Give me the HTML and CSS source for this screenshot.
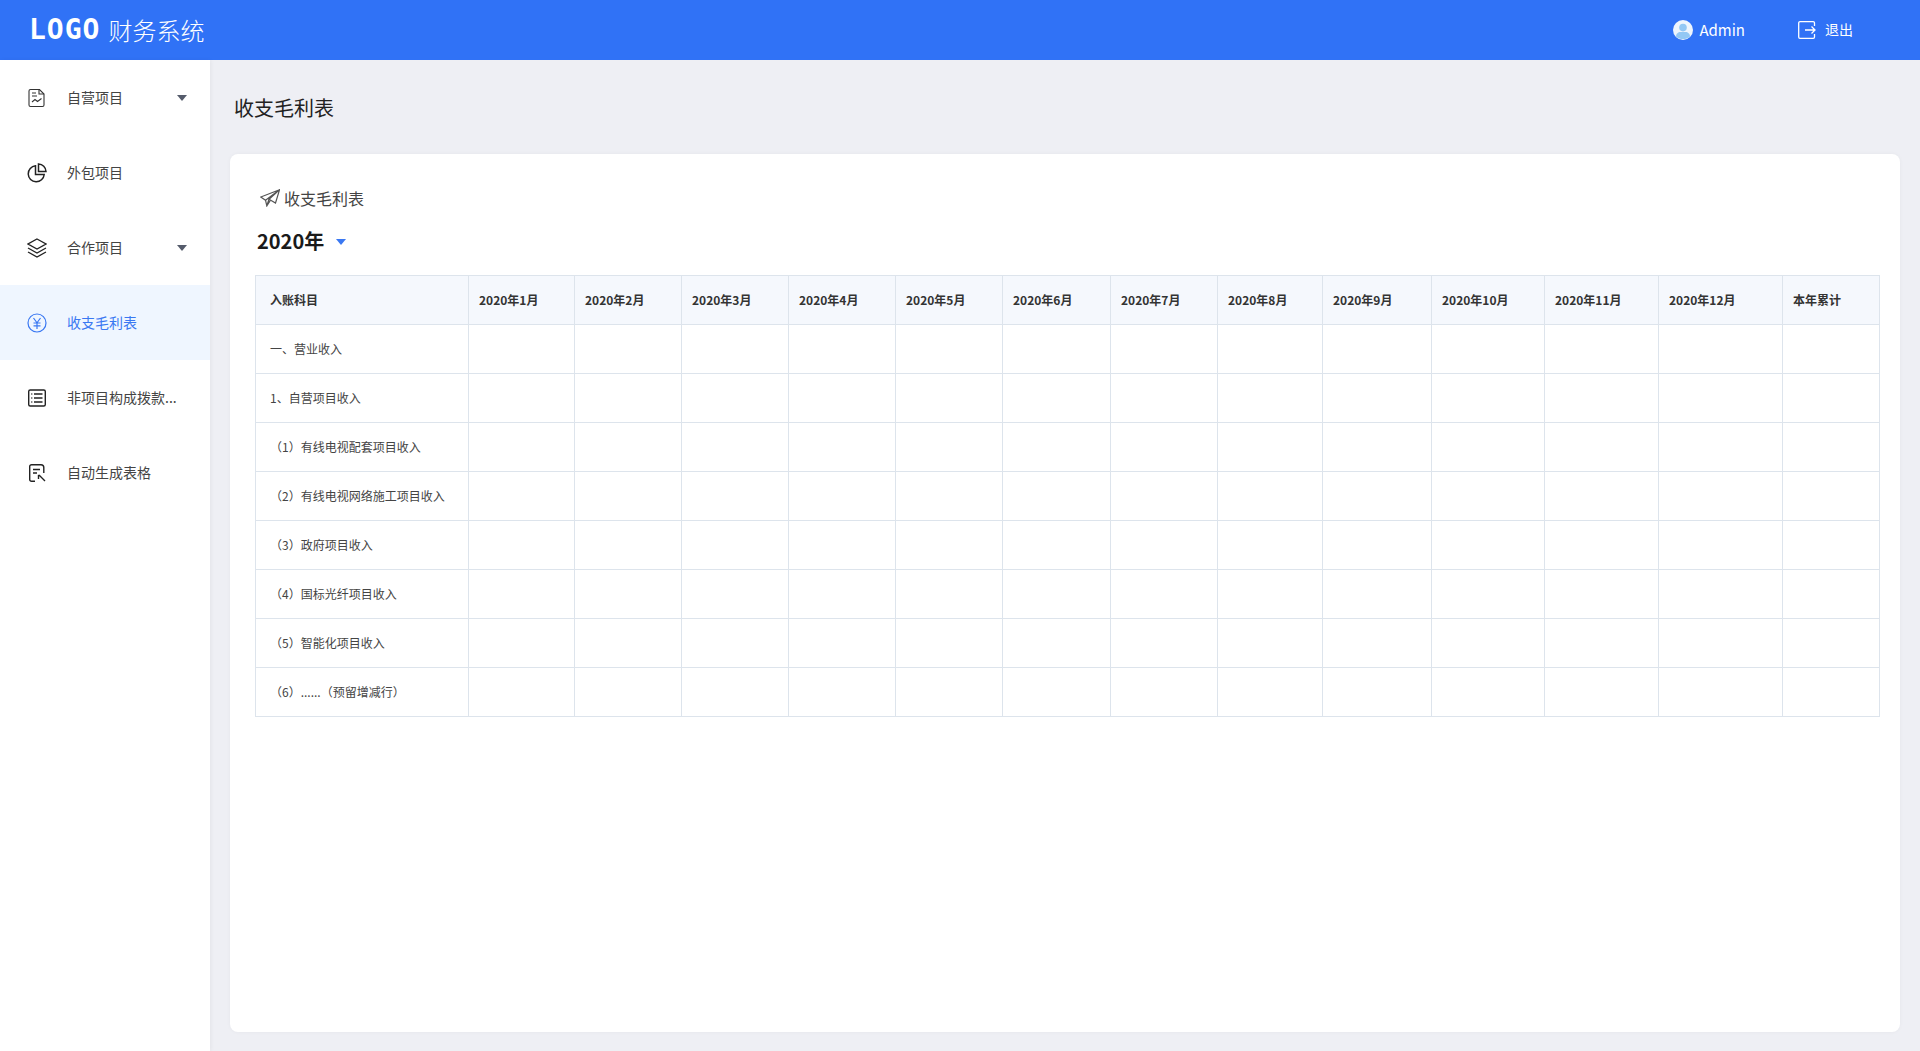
FILE: index.html
```html
<!DOCTYPE html>
<html lang="zh-CN">
<head>
    <meta charset="UTF-8">
    <title>收支毛利表</title>
    <link rel="stylesheet" href="styles.css">
</head>
<body>
    <header class="topbar">
        <div class="brand"><span class="brand-logo">LOGO</span><span class="brand-name">财务系统</span></div>
        <div class="topbar-user">
            <svg class="avatar" viewBox="0 0 20 20"><circle cx="10" cy="10" r="10" fill="#eef5fd"/><circle cx="10" cy="7.6" r="3.8" fill="#93c8f4"/><path d="M3 16.5c0-3 2.500-4.500 4-4.500h6c1.500 0 4 1.500 4 4.500-2 2-4.500 2.500-7 2.500s-5-.5-7-2.500z" fill="#93c8f4"/></svg>
            <span class="user-name">Admin</span>
        </div>
        <div class="topbar-logout">
            <svg class="logout-icon" viewBox="0 0 18 18" fill="none" stroke="#fff" stroke-width="1.300"><path d="M16.500 5V2a1.300 1.300 0 0 0-1.300-1.300H2A1.300 1.300 0 0 0 .7 2v14A1.300 1.300 0 0 0 2 17.300h13.200a1.300 1.300 0 0 0 1.300-1.300v-3"/><path d="M7 9h10M13.500 5.500 17 9l-3.500 3.500"/></svg>
            <span class="logout-text">退出</span>
        </div>
    </header>

    <div class="layout">
        <aside class="sidebar">
            <a class="nav-item">
                <svg class="nav-icon" viewBox="0 0 20 20" fill="none" stroke="#333" stroke-width="1.100"><path d="M3.500 1.500h9l4.500 4.500v11a1.500 1.500 0 0 1-1.500 1.500h-12A1.500 1.500 0 0 1 2 17V3a1.500 1.500 0 0 1 1.500-1.500z"/><path d="M12 1.500V6h5M5 5h4M5 8h5"/><path d="m5 14 3-2.500 2.500 2 4-3"/></svg>
                <span class="nav-label">自营项目</span>
                <i class="nav-caret"></i>
            </a>
            <a class="nav-item">
                <svg class="nav-icon" viewBox="0 0 20 20" fill="none" stroke="#222" stroke-width="1.500"><path d="M8.500 2.800a8 8 0 1 0 8.700 8.700H8.500z"/><path d="M11.500 .9a7.800 7.800 0 0 1 7.500 7.600h-7.500z"/></svg>
                <span class="nav-label">外包项目</span>
            </a>
            <a class="nav-item">
                <svg class="nav-icon" viewBox="0 0 20 20" fill="none" stroke="#222" stroke-width="1.300"><path d="M10 1 19 6l-9 5-9-5z"/><path d="m1 10 9 5 9-5"/><path d="m1 14 9 5 9-5"/></svg>
                <span class="nav-label">合作项目</span>
                <i class="nav-caret"></i>
            </a>
            <a class="nav-item active">
                <svg class="nav-icon" viewBox="0 0 20 20" fill="none" stroke="#3a78f2" stroke-width="1.200"><circle cx="10" cy="10" r="9"/><path d="M6.500 5 10 9.800 13.500 5M6.500 10h7M6.500 12.800h7M10 9.800V16"/></svg>
                <span class="nav-label">收支毛利表</span>
            </a>
            <a class="nav-item">
                <svg class="nav-icon" viewBox="0 0 20 20" fill="none" stroke="#222" stroke-width="1.400"><rect x="1.700" y="2" width="16.600" height="16" rx="1.500"/><path d="M7 6h8.500M7 10h8.500M7 14h8.500M4.300 6h1M4.300 10h1M4.300 14h1"/></svg>
                <span class="nav-label">非项目构成拨款...</span>
            </a>
            <a class="nav-item">
                <svg class="nav-icon" viewBox="0 0 20 20" fill="none" stroke="#222" stroke-width="1.400"><path d="M8 18.300H4.500A1.800 1.800 0 0 1 2.700 16.500V3.500A1.800 1.800 0 0 1 4.500 1.700h9.500a2.800 2.800 0 0 1 2.800 2.800V10"/><path d="M6 6.500h7M6 10h4"/><path d="M12.500 12.500h-1.300M12 12l6 6M11.500 12v4"/></svg>
                <span class="nav-label">自动生成表格</span>
            </a>
        </aside>

        <main class="content">
            <h1 class="page-title">收支毛利表</h1>
            <section class="card">
                <div class="card-title">
                    <svg class="plane-icon" viewBox="0 0 20 18" fill="none" stroke="#555" stroke-width="1.200"><path d="M19.500 .8 .8 8l4.700 3.200L19.500 .8zM19.500 .8 15.500 14 9 10.200 19.500 .8z"/><path d="M5.500 11.200 6.800 16.800 9 10.200M6.800 16.800 10.500 11.200"/></svg>
                    <span>收支毛利表</span>
                </div>
                <div class="year-select"><span>2020年</span><i class="year-caret"></i></div>

                <table class="report">
                    <colgroup>
                        <col class="col-name"><col class="col-106"><col class="col-107"><col class="col-107"><col class="col-107"><col class="col-107"><col class="col-108"><col class="col-107"><col class="col-105"><col class="col-109"><col class="col-113"><col class="col-114"><col class="col-124"><col class="col-97">
                    </colgroup>
                    <thead>
                        <tr><th>入账科目</th><th>2020年1月</th><th>2020年2月</th><th>2020年3月</th><th>2020年4月</th><th>2020年5月</th><th>2020年6月</th><th>2020年7月</th><th>2020年8月</th><th>2020年9月</th><th>2020年10月</th><th>2020年11月</th><th>2020年12月</th><th>本年累计</th></tr>
                    </thead>
                    <tbody>
                        <tr><td>一、营业收入</td><td></td><td></td><td></td><td></td><td></td><td></td><td></td><td></td><td></td><td></td><td></td><td></td><td></td></tr>
                        <tr><td>1、自营项目收入</td><td></td><td></td><td></td><td></td><td></td><td></td><td></td><td></td><td></td><td></td><td></td><td></td><td></td></tr>
                        <tr><td>（1）有线电视配套项目收入</td><td></td><td></td><td></td><td></td><td></td><td></td><td></td><td></td><td></td><td></td><td></td><td></td><td></td></tr>
                        <tr><td>（2）有线电视网络施工项目收入</td><td></td><td></td><td></td><td></td><td></td><td></td><td></td><td></td><td></td><td></td><td></td><td></td><td></td></tr>
                        <tr><td>（3）政府项目收入</td><td></td><td></td><td></td><td></td><td></td><td></td><td></td><td></td><td></td><td></td><td></td><td></td><td></td></tr>
                        <tr><td>（4）国标光纤项目收入</td><td></td><td></td><td></td><td></td><td></td><td></td><td></td><td></td><td></td><td></td><td></td><td></td><td></td></tr>
                        <tr><td>（5）智能化项目收入</td><td></td><td></td><td></td><td></td><td></td><td></td><td></td><td></td><td></td><td></td><td></td><td></td><td></td></tr>
                        <tr><td>（6）......（预留增减行）</td><td></td><td></td><td></td><td></td><td></td><td></td><td></td><td></td><td></td><td></td><td></td><td></td><td></td></tr>
                    </tbody>
                </table>
            </section>
        </main>
    </div>
</body>
</html>
```
FILE: styles.css
```css
* {
    box-sizing: border-box;
}
body {
    margin: 0;
    height: 100vh;
    overflow: hidden;
    display: flex;
    flex-direction: column;
    background: #eeeff4;
    color: #333;
    font-family: "Noto Sans CJK SC", "Noto Sans", sans-serif;
}

/* top bar */
.topbar {
    height: 60px;
    flex-shrink: 0;
    display: flex;
    align-items: center;
    padding-left: 29px;
    background: #3072f6;
    color: #fff;
    font-size: 14px;
}
.brand {
    display: flex;
    align-items: center;
    margin-right: auto;
    padding-bottom: 2px;
}
.brand-logo {
    font-family: "DejaVu Sans Mono", monospace;
    font-size: 28px;
    font-weight: 700;
    letter-spacing: 1px;
    margin-right: 8px;
}
.brand-name {
    font-size: 24px;
    font-weight: 300;
}
.topbar-user,
.topbar-logout {
    display: flex;
    align-items: center;
}
.topbar-user {
    gap: 6px;
    margin-right: 53px;
}
.user-name {
    font-size: 15px;
    margin-bottom: 2px;
}
.topbar-logout {
    gap: 9px;
    margin-right: 67px;
}
.logout-text {
    margin-bottom: 2px;
}
.avatar {
    width: 20px;
    height: 20px;
}
.logout-icon {
    width: 18px;
    height: 18px;
}

/* side menu */
.layout {
    flex: 1;
    display: flex;
    min-height: 0;
}
.sidebar {
    width: 210px;
    flex-shrink: 0;
    background: #fff;
    box-shadow: 1px 0 4px rgba(0, 0, 0, 0.05);
}
.nav-item {
    height: 75px;
    display: flex;
    align-items: center;
    padding-left: 27px;
    font-size: 14px;
    color: #444;
}
.nav-item.active {
    background: #eff6ff;
    color: #3a78f2;
}
.nav-icon {
    width: 20px;
    height: 20px;
    margin-right: 20px;
    flex-shrink: 0;
}
.nav-label {
    flex: 1;
    margin-bottom: 2px;
    white-space: nowrap;
}
.nav-caret {
    width: 0;
    height: 0;
    margin-right: 23px;
    border-left: 5px solid transparent;
    border-right: 5px solid transparent;
    border-top: 6px solid #555b6b;
}

/* main area */
.content {
    flex: 1;
    min-width: 0;
    display: flex;
    flex-direction: column;
    padding: 0 20px 19px;
}
.page-title {
    height: 94px;
    margin: 0;
    padding: 34px 4px 0;
    font-size: 20px;
    font-weight: 400;
    line-height: 28px;
    color: #222;
}
.card {
    flex: 1;
    padding: 32px 20px 0 25px;
    background: #fff;
    border-radius: 8px;
    box-shadow: 0 0 4px rgba(0, 0, 0, 0.04);
}
.card-title {
    height: 24px;
    display: flex;
    align-items: center;
    gap: 4px;
    padding-left: 5px;
    font-size: 16px;
    color: #444;
}
.plane-icon {
    width: 20px;
    height: 18px;
}
.year-select {
    height: 30px;
    margin-top: 16px;
    padding-left: 2px;
    display: flex;
    align-items: center;
    gap: 12px;
    font-size: 20px;
    font-weight: 700;
    line-height: 30px;
    color: #1a1a1a;
}
.year-caret {
    width: 0;
    height: 0;
    margin-top: 2px;
    border-left: 5.500px solid transparent;
    border-right: 5.500px solid transparent;
    border-top: 6px solid #3a78f2;
}

/* table */
.report {
    width: 1624px;
    margin-top: 19px;
    table-layout: fixed;
    border-collapse: collapse;
    font-size: 12px;
    color: #444;
}
.report th,
.report td {
    height: 49px;
    padding: 0 10px 2px;
    border: 1px solid #dde4ec;
    text-align: left;
    white-space: nowrap;
}
.report th {
    background: #f5f8fd;
    font-weight: 700;
    color: #333;
}
.report th:first-child,
.report td:first-child {
    padding-left: 14px;
}
.col-name { width: 213px; }
.col-97 { width: 97px; }
.col-105 { width: 105px; }
.col-106 { width: 106px; }
.col-107 { width: 107px; }
.col-108 { width: 108px; }
.col-109 { width: 109px; }
.col-113 { width: 113px; }
.col-114 { width: 114px; }
.col-124 { width: 124px; }
```
